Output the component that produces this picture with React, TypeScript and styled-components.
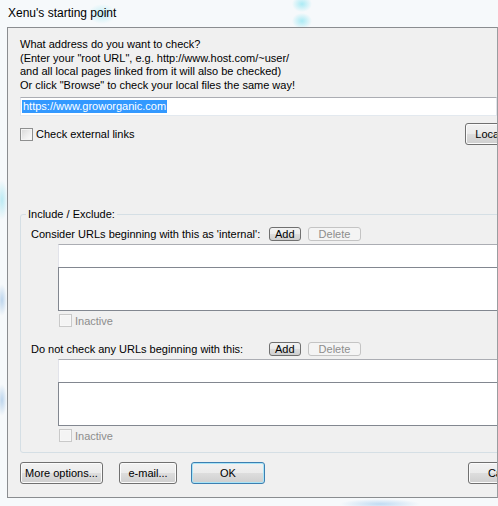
import React from "react";
import styled, { createGlobalStyle } from "styled-components";

const GlobalStyle = createGlobalStyle`
  html, body {
    margin: 0;
    padding: 0;
    overflow: hidden;
  }
  body {
    font-family: "Liberation Sans", Arial, sans-serif;
    font-size: 11px;
    color: #000;
  }
`;

export default function App() {
  return (
    <>
      <GlobalStyle />
      <WindowFrame>
        <TitleBar>Xenu's starting point</TitleBar>
        <Client>
          <Inner>
            <Intro>
              What address do you want to check?
              <br />
              (Enter your "root URL", e.g. http://www.host.com/~user/
              <br />
              and all local pages linked from it will also be checked)
              <br />
              Or click "Browse" to check your local files the same way!
            </Intro>

            <UrlBox>
              <Selected>https://www.groworganic.com</Selected>
            </UrlBox>

            <CheckRow>
              <CheckLabel>
                <CheckBox />
                Check external links
              </CheckLabel>
              <PushButton $width={64}>Local file</PushButton>
            </CheckRow>

            <Group>
              <Legend>Include / Exclude:</Legend>

              <ListSection
                label="Consider URLs beginning with this as 'internal':"
                first
              />
              <ListSection label="Do not check any URLs beginning with this:" />
            </Group>

            <ButtonRow>
              <PushButton $width={83}>More options...</PushButton>
              <PushButton $width={58} $gap={16}>e-mail...</PushButton>
              <PushButton $width={74} $gap={14} $default>
                OK
              </PushButton>
              <PushButton $width={74} $gap={203}>
                Cancel
              </PushButton>
            </ButtonRow>
          </Inner>
        </Client>
      </WindowFrame>
    </>
  );
}

function ListSection({ label, first }: { label: string; first?: boolean }) {
  return (
    <Section $first={first}>
      <SectionHead>
        <SectionLabel>{label}</SectionLabel>
        <SmallButton>Add</SmallButton>
        <SmallButton $disabled>Delete</SmallButton>
      </SectionHead>
      <EntryBox />
      <ListBox />
      <InactiveRow>
        <CheckBox $disabled />
        Inactive
      </InactiveRow>
    </Section>
  );
}

const WindowFrame = styled.div`
  width: 498px;
  height: 506px;
  overflow: hidden;
  background-color: #f6f9fb;
  background-image: radial-gradient(ellipse 14px 10px at 102px 14px, rgba(150, 230, 240, 0.55), transparent),
    radial-gradient(ellipse 10px 8px at 302px 4px, rgba(120, 225, 240, 0.6), transparent),
    radial-gradient(ellipse 10px 8px at 302px 21px, rgba(120, 225, 240, 0.6), transparent),
    radial-gradient(ellipse 6px 20px at 2px 200px, rgba(130, 220, 235, 0.5), transparent),
    radial-gradient(ellipse 5px 16px at 2px 300px, rgba(120, 170, 220, 0.45), transparent),
    radial-gradient(ellipse 5px 16px at 2px 400px, rgba(120, 170, 220, 0.45), transparent),
    radial-gradient(ellipse 40px 5px at 380px 504px, rgba(140, 190, 235, 0.5), transparent);
  display: flex;
  flex-direction: column;
`;

const TitleBar = styled.div`
  height: 27px;
  padding-left: 8px;
  font-size: 12px;
  line-height: 26px;
  color: #000;
  flex-shrink: 0;
`;

const Client = styled.div`
  margin-left: 7px;
  width: 491px;
  height: 471px;
  box-sizing: border-box;
  border: 1px solid #8a8d90;
  border-right-color: #9a9da0;
  background: #f0f0f0;
  overflow: hidden;
`;

const Inner = styled.div`
  width: 600px;
  padding: 10px 0 0 12px;
  display: flex;
  flex-direction: column;
  align-items: flex-start;
`;

const Intro = styled.div`
  line-height: 13.5px;
  white-space: nowrap;
`;

const UrlBox = styled.div`
  margin-top: 5px;
  width: 477px;
  height: 19px;
  box-sizing: border-box;
  border: 1px solid #e2e3ea;
  border-top-color: #abadb3;
  border-bottom-color: #e3e9ef;
  background: #fff;
  display: flex;
  align-items: center;
  padding-left: 1px;
`;

const Selected = styled.span`
  background: #3399ff;
  color: #fff;
  line-height: 13px;
  padding: 0 1px;
`;

const CheckRow = styled.div`
  margin-top: 7px;
  width: 509px;
  height: 22px;
  display: flex;
  align-items: center;
  justify-content: space-between;
`;

const CheckLabel = styled.label`
  display: flex;
  align-items: center;
  gap: 3px;
`;

const CheckBox = styled.span<{ $disabled?: boolean }>`
  display: inline-block;
  width: 13px;
  height: 13px;
  box-sizing: border-box;
  border: 1px solid ${(p) => (p.$disabled ? "#c9c9c9" : "#8e8f8f")};
  background: ${(p) =>
    p.$disabled ? "#f4f4f4" : "linear-gradient(135deg, #d8d8d8 0%, #f0f0f0 60%, #fbfbfb 100%)"};
  box-shadow: inset 0 0 0 1px ${(p) => (p.$disabled ? "#f7f7f7" : "#f4f4f4")};
  flex-shrink: 0;
`;

const PushButton = styled.button<{ $width: number; $gap?: number; $default?: boolean }>`
  width: ${(p) => p.$width}px;
  height: 22px;
  margin-left: ${(p) => p.$gap ?? 0}px;
  padding: 0;
  font-family: "Liberation Sans", Arial, sans-serif;
  font-size: 11px;
  color: #000;
  white-space: nowrap;
  border: 1px solid ${(p) => (p.$default ? "#3c7fb1" : "#707070")};
  border-radius: 3px;
  background: linear-gradient(to bottom, #f2f2f2 0%, #ebebeb 50%, #dddddd 51%, #cfcfcf 100%);
  box-shadow: inset 0 0 0 1px ${(p) => (p.$default ? "#a9e4f7" : "#fbfbfb")};
  flex-shrink: 0;
`;

const Group = styled.fieldset`
  margin: 62px 0 0 0;
  padding: 0 0 10px 10px;
  width: 600px;
  box-sizing: border-box;
  border: 1px solid #d5dfe5;
  border-radius: 3px;
`;

const Legend = styled.legend`
  margin-left: -5px;
  padding: 0 2px;
  line-height: 14px;
`;

const Section = styled.div<{ $first?: boolean }>`
  margin-top: ${(p) => (p.$first ? 6 : 15)}px;
  display: flex;
  flex-direction: column;
  align-items: flex-start;
`;

const SectionHead = styled.div`
  height: 14px;
  display: flex;
  align-items: center;
  gap: 7px;
`;

const SectionLabel = styled.span`
  width: 231px;
`;

const SmallButton = styled.span<{ $disabled?: boolean }>`
  height: 14px;
  box-sizing: border-box;
  padding: 0 ${(p) => (p.$disabled ? 10 : 5)}px;
  line-height: 12px;
  border: 1px solid ${(p) => (p.$disabled ? "#c4c4c4" : "#707070")};
  border-radius: 3px;
  color: ${(p) => (p.$disabled ? "#8d8d8d" : "#000")};
  background: ${(p) =>
    p.$disabled ? "#f4f4f4" : "linear-gradient(to bottom, #f2f2f2 0%, #ebebeb 50%, #dddddd 51%, #cfcfcf 100%)"};
  font-size: 11px;
`;

const EntryBox = styled.div`
  margin: 3px 0 0 27px;
  width: 460px;
  height: 23px;
  box-sizing: border-box;
  border: 1px solid #e2e3ea;
  border-top-color: #abadb3;
  border-bottom: none;
  background: #fff;
`;

const ListBox = styled.div`
  margin-left: 27px;
  width: 460px;
  height: 44px;
  box-sizing: border-box;
  border: 1px solid #828790;
  background: #fff;
`;

const InactiveRow = styled.div`
  margin: 3px 0 0 28px;
  height: 13px;
  display: flex;
  align-items: center;
  gap: 3px;
  color: #8d8d8d;
`;

const ButtonRow = styled.div`
  margin-top: 9px;
  display: flex;
  align-items: center;
`;
